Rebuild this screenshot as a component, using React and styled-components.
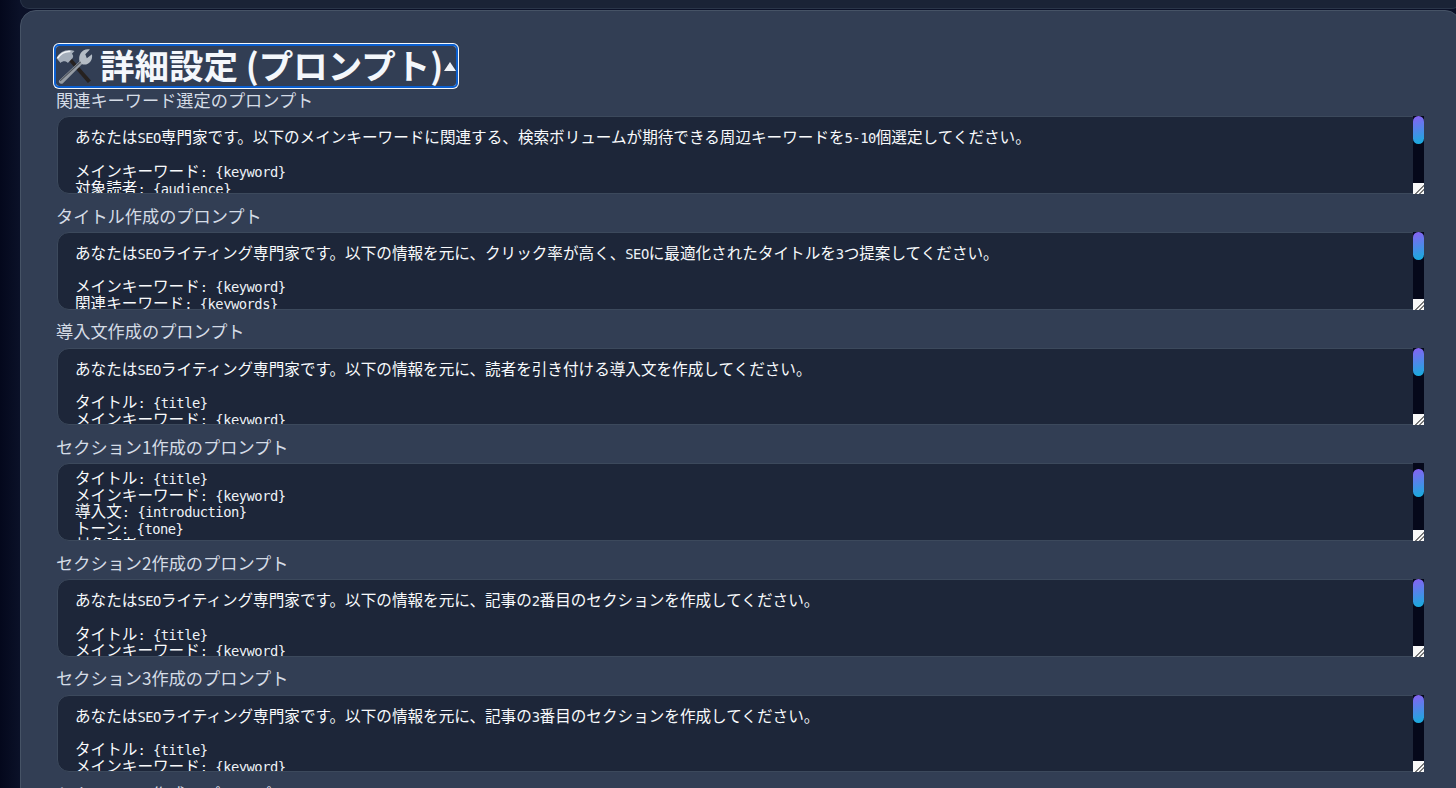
import React, { useEffect, useRef } from "react";
import styled, { createGlobalStyle } from "styled-components";

const Global = createGlobalStyle`
  html, body { margin: 0; padding: 0; height: 100%; overflow: hidden; background: #0a0e27; }
  body { font-family: "Noto Sans CJK JP", "Noto Sans", sans-serif; }
  #root { height: 100%; }
`;

const Page = styled.div`
  width: 1441px;
  height: 788px;
  padding-left: 20px;
  display: flex;
  flex-direction: column;
  gap: 1px;
  overflow: hidden;
  background: linear-gradient(90deg, #04081c 0, #0b1128 20px, #0b1128 100%);
`;

const TopCard = styled.div`
  flex: 0 0 9px;
  width: 1441px;
  background: #1a2336;
  border: 1px solid #2a3549;
  border-top: 0;
  box-sizing: border-box;
  border-radius: 0 0 16px 16px;
`;

const Card = styled.div`
  flex: 0 0 auto;
  width: 1441px;
  box-sizing: border-box;
  background: #323e54;
  border: 1px solid #465366;
  border-radius: 16px;
  padding: 35px 36px 0 35px;
`;

const Details = styled.details`
  display: block;
`;

const Summary = styled.summary`
  list-style: none;
  display: flex;
  align-items: center;
  width: fit-content;
  height: 40px;
  padding: 0;
  margin-bottom: 4px;
  color: #f4f7fb;
  border-radius: 3px;
  outline: 2px solid #0b5fd0;
  box-shadow: 0 0 0 3px #f4f7fb;
  white-space: nowrap;
  &::-webkit-details-marker { display: none; }
  &::after {
    content: "";
    display: block;
    margin-left: 1px;
    width: 0;
    height: 0;
    border-left: 6px solid transparent;
    border-right: 6px solid transparent;
    border-bottom: 9px solid #eef2f7;
  }
`;

const SummaryTitle = styled.span`
  font-size: 34.5px;
  font-weight: 700;
  line-height: 40px;
  margin-top: -4px;
`;

const Emoji = styled.svg`
  width: 37px;
  height: 37px;
  margin-right: 7px;
  flex: none;
`;

const Field = styled.div`
  margin-bottom: 11.77px;
`;

const Label = styled.label`
  display: block;
  font-size: 17.2px;
  line-height: 20.4px;
  color: #d5dce6;
  margin-bottom: 6px;
`;

const PromptWrap = styled.div`
  position: relative;
  width: 1367px;
  height: 77.5px;
  margin-left: 1px;
`;

const PromptBox = styled.div`
  box-sizing: border-box;
  width: 100%;
  height: 100%;
  padding: 11px 28px 12px 17px;
  background: #1d2639;
  border: 1px solid #3c495c;
  border-radius: 12px;
  color: #f8fafc;
  font-family: "Noto Sans CJK JP", sans-serif;
  font-size: 15.6px;
  line-height: 16.7px;
  white-space: pre-wrap;
  overflow: hidden;
`;

const Latin = styled.span`
  font-family: "DejaVu Sans Mono", monospace;
  font-size: 13.8px;
  letter-spacing: -0.51px;
  line-height: 0;
  color: #eef2f7;
`;

const ScrollTrack = styled.div`
  position: absolute;
  top: 0;
  right: 0;
  bottom: 0;
  width: 11px;
  background: #05081a;
`;

const ScrollThumb = styled.div`
  position: absolute;
  left: 0;
  right: 0;
  top: ${(p) => p.$top}px;
  height: 28px;
  border-radius: 6px;
  background: linear-gradient(165deg, #8a60f3, #13afdc);
`;

const Resizer = styled.div`
  position: absolute;
  right: 0;
  bottom: 0;
  width: 11px;
  height: 11px;
  background:
    linear-gradient(135deg, transparent 58%, #777 58%, #777 66%, transparent 66%, transparent 76%, #777 76%, #777 84%, transparent 84%),
    #f8f8f8;
`;

const tail = `
メインキーワード: {keyword}
関連キーワード: {keywords}
対象読者: {audience}
トーン: {tone}
文字数: {length}`;

const prompts = [
  {
    label: "関連キーワード選定のプロンプト",
    text: `あなたはSEO専門家です。以下のメインキーワードに関連する、検索ボリュームが期待できる周辺キーワードを5-10個選定してください。

メインキーワード: {keyword}
対象読者: {audience}
トーン: {tone}
${tail}`,
  },
  {
    label: "タイトル作成のプロンプト",
    text: `あなたはSEOライティング専門家です。以下の情報を元に、クリック率が高く、SEOに最適化されたタイトルを3つ提案してください。

メインキーワード: {keyword}
関連キーワード: {keywords}
対象読者: {audience}
${tail}`,
  },
  {
    label: "導入文作成のプロンプト",
    text: `あなたはSEOライティング専門家です。以下の情報を元に、読者を引き付ける導入文を作成してください。

タイトル: {title}
メインキーワード: {keyword}
対象読者: {audience}
${tail}`,
  },
  {
    label: "セクション1作成のプロンプト",
    scrollTop: 40,
    thumbTop: 6,
    text: `あなたはSEOライティング専門家です。以下の情報を元に、記事の最初のセクションを作成してください。

タイトル: {title}
メインキーワード: {keyword}
導入文: {introduction}
トーン: {tone}
対象読者: {audience}
${tail}`,
  },
  {
    label: "セクション2作成のプロンプト",
    text: `あなたはSEOライティング専門家です。以下の情報を元に、記事の2番目のセクションを作成してください。

タイトル: {title}
メインキーワード: {keyword}
対象読者: {audience}
${tail}`,
  },
  {
    label: "セクション3作成のプロンプト",
    text: `あなたはSEOライティング専門家です。以下の情報を元に、記事の3番目のセクションを作成してください。

タイトル: {title}
メインキーワード: {keyword}
対象読者: {audience}
${tail}`,
  },
  {
    label: "セクション4作成のプロンプト",
    text: `あなたはSEOライティング専門家です。以下の情報を元に、記事の4番目のセクションを作成してください。

タイトル: {title}
メインキーワード: {keyword}
${tail}`,
  },
];

function Runs({ text }) {
  const parts = text.split(/([\x20-\x7e]+)/);
  return parts.map((p, i) => (i % 2 ? <Latin key={i}>{p}</Latin> : p));
}

function Prompt({ text, scrollTop, thumbTop = 0 }) {
  const ref = useRef(null);
  useEffect(() => {
    if (scrollTop && ref.current) ref.current.scrollTop = scrollTop;
  }, [scrollTop]);
  return (
    <PromptWrap>
      <PromptBox ref={ref}>
        <Runs text={text} />
      </PromptBox>
      <ScrollTrack>
        <ScrollThumb $top={thumbTop} />
      </ScrollTrack>
      <Resizer />
    </PromptWrap>
  );
}

function ToolsIcon() {
  return (
    <Emoji viewBox="0 0 36 36" aria-hidden="true">
      <path d="M12 12 L31 34 L34 31.5 L14.500 9.500 Z" fill="#26211f" />
      <path d="M0.500 10 C4 3 11 0.500 18 3 L15.500 5.500 C17 7 17 8.500 16 10 L11.500 14.500 C9.500 12.500 6.500 12.500 4.500 14.500 Z" fill="#a4aeba" />
      <path d="M1.500 10 C5 5 9 3 14 3.500" stroke="#f0f3f6" strokeWidth="1.5" fill="none" />
      <path d="M3 31.500 L23.500 12.500 L26 15 L6.500 34.500 C4.500 35.500 2 33.500 3 31.500 Z" fill="#959ca4" />
      <path d="M23 13.500 C21 6.500 26 0 33 1.500 L28.500 6 L30 10 L35 6 C36 12 32 17 26 16 Z" fill="#b4bcc5" />
      <path d="M4 32 L24 13.500" stroke="#4c525a" strokeWidth="1.1" />
    </Emoji>
  );
}

export default function App() {
  return (
    <Page>
      <Global />
      <TopCard />
      <Card>
        <Details open>
          <Summary>
            <ToolsIcon />
            <SummaryTitle>詳細設定 (プロンプト)</SummaryTitle>
          </Summary>
          {prompts.map((p) => (
            <Field key={p.label}>
              <Label>{p.label}</Label>
              <Prompt text={p.text} scrollTop={p.scrollTop} thumbTop={p.thumbTop} />
            </Field>
          ))}
        </Details>
      </Card>
    </Page>
  );
}
